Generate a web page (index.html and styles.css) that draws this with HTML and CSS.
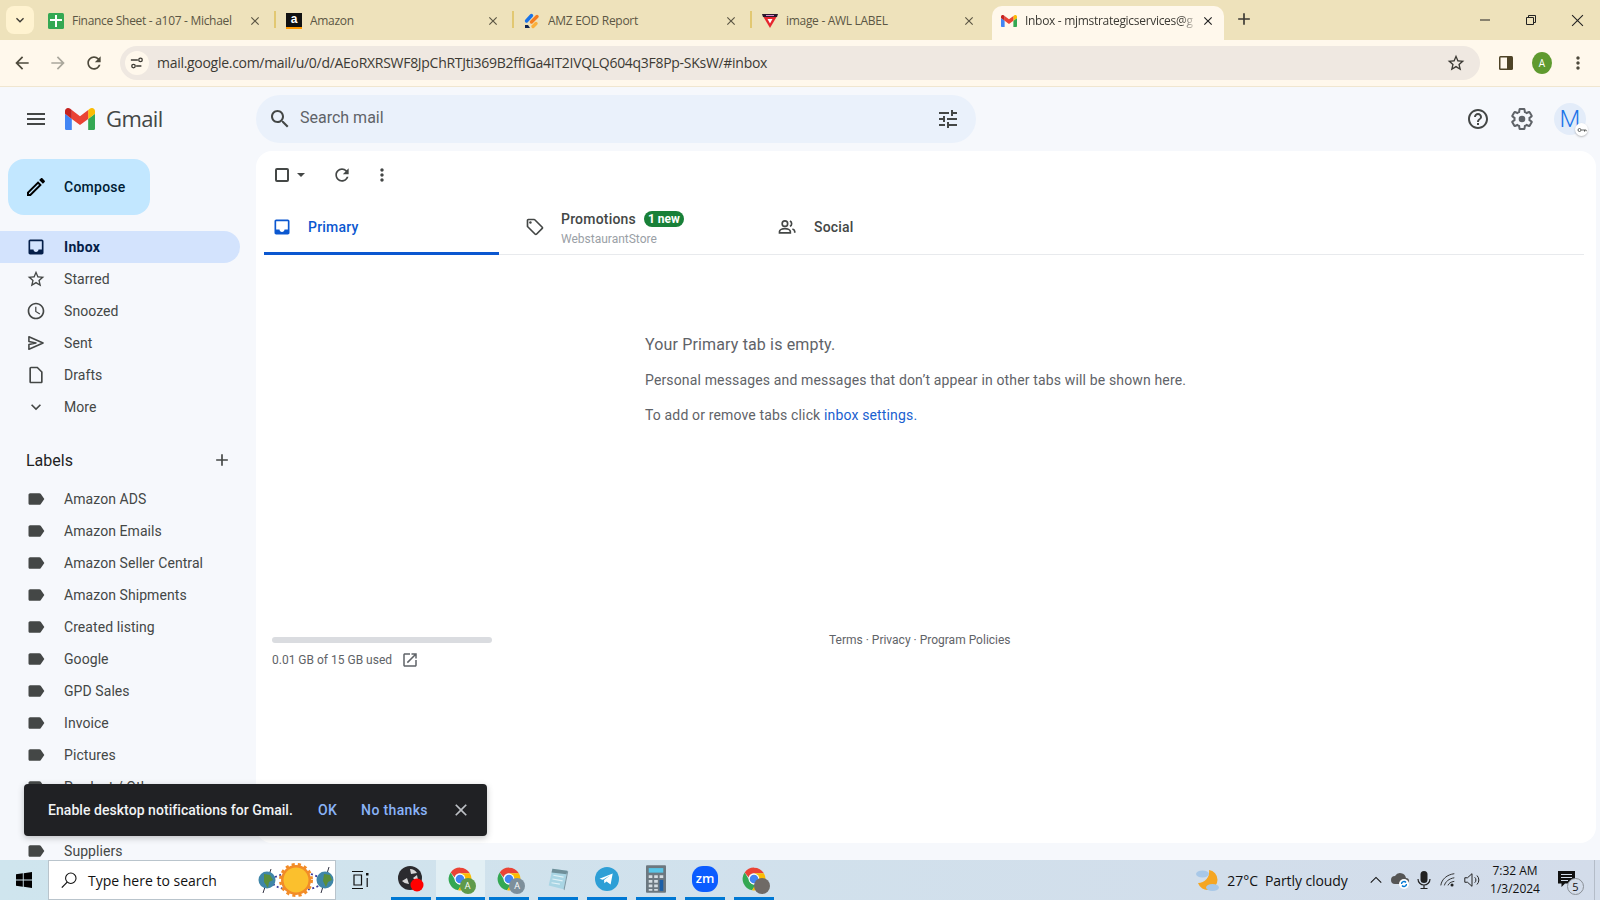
FILE: index.html
```html
<!DOCTYPE html>
<html lang="en">
<head>
    <meta charset="UTF-8">
    <title>Inbox - Gmail</title>
    <link rel="stylesheet" href="styles.css">
</head>
<body>
    <svg class="defs" width="0" height="0">
        <symbol id="chrome" viewBox="0 0 48 48">
            <path fill="#ea4335" d="M24 3a21 21 0 0 1 18.2 10.5H24a10.5 10.5 0 0 0-10 7.3L6.8 11.800A21 21 0 0 1 24 3z"/>
            <path fill="#34a853" d="M6.800 11.800 15 26a10.5 10.5 0 0 0 12.500 8.400L20.500 44.700A21 21 0 0 1 6.800 11.800z"/>
            <path fill="#fbbc04" d="M42.200 13.500A21 21 0 0 1 20.500 44.700L29 30a10.5 10.5 0 0 0 0-12.500l-5-4z"/>
            <circle cx="24" cy="24" r="10" fill="#fff"/>
            <circle cx="24" cy="24" r="8" fill="#4285f4"/>
        </symbol>
        <symbol id="close" viewBox="0 0 24 24">
            <path d="M19 6.41 17.59 5 12 10.59 6.41 5 5 6.41 10.59 12 5 17.59 6.41 19 12 13.41 17.59 19 19 17.59 13.41 12z"/>
        </symbol>
        <symbol id="label" viewBox="0 0 24 24">
            <path d="M17.63 5.84C17.27 5.33 16.67 5 16 5L5 5.01C3.9 5.01 3 5.9 3 7v10c0 1.1.9 1.99 2 1.99L16 19c.67 0 1.27-.33 1.63-.84L22 12l-4.37-6.16z"/>
        </symbol>
        <symbol id="gmail-m" viewBox="52 42 88 66">
            <path fill="#4285f4" d="M58 108h14V74L52 59v43c0 3.32 2.69 6 6 6"/>
            <path fill="#34a853" d="M120 108h14c3.32 0 6-2.69 6-6V59l-20 15"/>
            <path fill="#fbbc04" d="M120 48v26l20-15v-8c0-7.42-8.47-11.65-14.4-7.2"/>
            <path fill="#ea4335" d="M72 74V48l24 18 24-18v26L96 92"/>
            <path fill="#c5221f" d="M52 51v8l20 15V48l-5.6-4.2c-5.94-4.45-14.4-.22-14.4 7.2"/>
        </symbol>
        <symbol id="inbox" viewBox="0 0 24 24">
            <path d="M19 3H5c-1.1 0-2 .9-2 2v14c0 1.1.9 2 2 2h14c1.1 0 2-.9 2-2V5c0-1.100-.9-2-2-2zm0 12h-4c0 1.66-1.34 3-3 3s-3-1.34-3-3H5V5h14v10z"/>
        </symbol>
    </svg>

    <div class="tabstrip">
        <button class="tab-search"><svg viewBox="0 0 24 24" width="16" height="16"><path d="M16.59 8.59 12 13.17 7.41 8.59 6 10l6 6 6-6z"/></svg></button>
        <div class="tab">
            <svg class="favicon" viewBox="0 0 16 16"><rect width="16" height="16" rx="1.5" fill="#34a853"/><path fill="#fff" d="M7 2h2v4h5v2H9v6H7V8H2V6h5z"/></svg>
            <span class="tab-title">Finance Sheet - a107 - Michael</span>
            <svg class="tab-close"><use href="#close"/></svg>
        </div>
        <div class="tab">
            <span class="favicon fav-amazon">a</span>
            <span class="tab-title">Amazon</span>
            <svg class="tab-close"><use href="#close"/></svg>
        </div>
        <div class="tab">
            <svg class="favicon" viewBox="0 0 16 16"><path stroke="#1a73e8" stroke-width="3.4" stroke-linecap="round" d="M2.5 8 7.500 2.500"/><path stroke="#f57c1f" stroke-width="3.4" stroke-linecap="round" d="M7.500 9 13 3.500"/><path stroke="#fbb03b" stroke-width="3.4" stroke-linecap="round" d="M9 13.500l3-3"/><path fill="#12264f" d="M1 12h3l2 3H1z"/></svg>
            <span class="tab-title">AMZ EOD Report</span>
            <svg class="tab-close"><use href="#close"/></svg>
        </div>
        <div class="tab tab-last">
            <svg class="favicon" viewBox="0 0 16 16"><path fill="#2b1a2e" d="M0 1h16l-1 3H1z"/><path fill="#e6262e" d="M1.500 4h13L8 15z"/><path fill="#fff" d="M5.500 6h5L8 10.500z"/><path fill="#d98ad0" d="M4 2h8v1H4z"/></svg>
            <span class="tab-title">image - AWL LABEL</span>
            <svg class="tab-close"><use href="#close"/></svg>
        </div>
        <div class="tab tab-active">
            <svg class="favicon"><use href="#gmail-m"/></svg>
            <span class="tab-title tab-fade">Inbox - mjmstrategicservices@g</span>
            <svg class="tab-close"><use href="#close"/></svg>
        </div>
        <button class="new-tab"><svg viewBox="0 0 24 24" width="20" height="20"><path d="M19 13h-6v6h-2v-6H5v-2h6V5h2v6h6v2z"/></svg></button>
        <div class="window-controls">
            <span class="win-btn"><svg viewBox="0 0 12 12" width="12" height="12"><path d="M1 6h10" stroke="#222" fill="none"/></svg></span>
            <span class="win-btn"><svg viewBox="0 0 12 12" width="12" height="12"><path d="M1.500 3.500h7v7h-7zM3.500 3.500v-2h7v7h-2" stroke="#222" fill="none"/></svg></span>
            <span class="win-btn"><svg viewBox="0 0 12 12" width="13" height="13"><path d="M1 1l10 10M11 1 1 11" stroke="#222" fill="none"/></svg></span>
        </div>
    </div>

    <div class="toolbar">
        <span class="nav-btn"><svg viewBox="0 0 24 24" width="20" height="20"><path d="M20 11H7.83l5.59-5.59L12 4l-8 8 8 8 1.41-1.41L7.83 13H20v-2z"/></svg></span>
        <span class="nav-btn nav-disabled"><svg viewBox="0 0 24 24" width="20" height="20"><path d="M12 4l-1.41 1.41L16.17 11H4v2h12.17l-5.58 5.59L12 20l8-8z"/></svg></span>
        <span class="nav-btn"><svg viewBox="0 0 24 24" width="20" height="20"><path d="M17.65 6.35C16.2 4.9 14.21 4 12 4c-4.42 0-7.99 3.58-7.99 8s3.57 8 7.99 8c3.73 0 6.84-2.55 7.73-6h-2.08c-.82 2.33-3.04 4-5.65 4-3.31 0-6-2.69-6-6s2.69-6 6-6c1.66 0 3.14.69 4.22 1.78L13 11h7V4l-2.35 2.35z"/></svg></span>
        <div class="address">
            <span class="site-info"><svg viewBox="0 0 16 16" width="14" height="14"><path d="M1 4.500h8M13 11.500H7" stroke="#3c3a34" stroke-width="1.600" fill="none"/><circle cx="12" cy="4.500" r="2" stroke="#3c3a34" stroke-width="1.500" fill="none"/><circle cx="4" cy="11.500" r="2" stroke="#3c3a34" stroke-width="1.500" fill="none"/></svg></span>
            <span class="url">mail.google.com/mail/u/0/d/AEoRXRSWF8JpChRTJti369B2ffIGa4IT2IVQLQ604q3F8Pp-SKsW/#inbox</span>
            <svg class="bookmark" viewBox="0 0 24 24" width="20" height="20"><path d="M22 9.24l-7.19-.62L12 2 9.19 8.63 2 9.24l5.46 4.73L5.82 21 12 17.27 18.18 21l-1.63-7.03L22 9.24zM12 15.4l-3.76 2.27 1-4.28-3.32-2.88 4.38-.38L12 6.1l1.71 4.04 4.38.38-3.32 2.88 1 4.28L12 15.4z"/></svg>
        </div>
        <span class="nav-btn"><svg viewBox="0 0 16 16" width="16" height="16"><rect x="1" y="1" width="14" height="14" rx="1.500" fill="#4e4326"/><rect x="2.500" y="2.500" width="6.500" height="11" fill="#fff8ec"/></svg></span>
        <span class="nav-btn"><span class="chrome-avatar">A</span></span>
        <span class="nav-btn"><svg viewBox="0 0 24 24" width="20" height="20"><path d="M12 8c1.1 0 2-.9 2-2s-.9-2-2-2-2 .9-2 2 .9 2 2 2zm0 2c-1.100 0-2 .9-2 2s.9 2 2 2 2-.9 2-2-.9-2-2-2zm0 6c-1.100 0-2 .9-2 2s.9 2 2 2 2-.9 2-2-.9-2-2-2z"/></svg></span>
    </div>

    <div class="app">
        <div class="brand">
            <svg class="icon menu-icon" viewBox="0 0 24 24" width="24" height="24"><path d="M3 18h18v-2H3v2zm0-5h18v-2H3v2zm0-7v2h18V6H3z"/></svg>
            <svg class="gmail-logo" width="30" height="22.500"><use href="#gmail-m"/></svg>
            <span class="gmail-word">Gmail</span>
        </div>

        <div class="topbar">
            <div class="searchbox">
                <svg class="icon" viewBox="0 0 24 24" width="24" height="24"><path d="M15.5 14h-.79l-.28-.27C15.41 12.59 16 11.11 16 9.5 16 5.91 13.09 3 9.5 3S3 5.91 3 9.5 5.91 16 9.5 16c1.61 0 3.09-.59 4.23-1.57l.27.28v.79l5 4.99L20.49 19l-4.99-5zm-6 0C7.01 14 5 11.99 5 9.5S7.01 5 9.5 5 14 7.01 14 9.5 11.99 14 9.5 14z"/></svg>
                <span class="search-text">Search mail</span>
                <svg class="icon tune" viewBox="0 0 24 24" width="24" height="24"><path d="M3 17v2h6v-2H3zM3 5v2h10V5H3zm10 16v-2h8v-2h-8v-2h-2v6h2zM7 9v2H3v2h4v2h2V9H7zm14 4v-2H11v2h10zm-6-4h2V7h4V5h-4V3h-2v6z"/></svg>
            </div>
            <div class="top-actions">
                <span class="top-btn"><svg class="icon" viewBox="0 0 24 24" width="24" height="24"><path d="M11 18h2v-2h-2v2zm1-16C6.48 2 2 6.48 2 12s4.48 10 10 10 10-4.48 10-10S17.52 2 12 2zm0 18c-4.41 0-8-3.59-8-8s3.59-8 8-8 8 3.59 8 8-3.59 8-8 8zm0-14c-2.21 0-4 1.79-4 4h2c0-1.1.9-2 2-2s2 .9 2 2c0 2-3 1.75-3 5h2c0-2.25 3-2.5 3-5 0-2.21-1.79-4-4-4z"/></svg></span>
                <span class="top-btn"><svg class="gear" viewBox="0 0 24 24" width="24" height="24"><path d="M19.43 12.98c.04-.32.07-.64.07-.98s-.03-.66-.07-.98l2.11-1.65c.19-.15.24-.42.12-.64l-2-3.46c-.12-.22-.39-.3-.61-.22l-2.49 1c-.52-.4-1.08-.73-1.69-.98l-.38-2.65C14.46 2.18 14.25 2 14 2h-4c-.25 0-.46.18-.49.42l-.38 2.65c-.61.25-1.17.59-1.69.98l-2.49-1c-.23-.09-.49 0-.61.22l-2 3.46c-.13.22-.07.49.12.64l2.11 1.65c-.04.32-.07.65-.07.98s.03.66.07.98l-2.11 1.65c-.19.15-.24.42-.12.64l2 3.46c.12.22.39.3.61.22l2.49-1c.52.4 1.08.73 1.69.98l.38 2.65c.03.24.24.42.49.42h4c.25 0 .46-.18.49-.42l.38-2.65c.61-.25 1.17-.59 1.69-.98l2.49 1c.23.09.49 0 .61-.22l2-3.46c.12-.22.07-.49-.12-.64l-2.11-1.65z"/><circle cx="12" cy="12" r="3.3"/></svg></span>
                <span class="account">M<span class="key-badge"><svg viewBox="0 0 12 12" width="10" height="10"><circle cx="3" cy="6" r="1.800" fill="none" stroke="#444746"/><path d="M5 6h6M9 6v2M11 6v1.500" stroke="#444746" fill="none"/></svg></span></span>
            </div>
        </div>

        <aside class="sidebar">
            <button class="compose">
                <svg viewBox="0 0 24 24" width="24" height="24"><path d="M14.06 9.02l.92.92L5.92 19H5v-.92l9.06-9.06M17.66 3c-.25 0-.51.1-.7.29l-1.83 1.83 3.75 3.75 1.83-1.83c.39-.39.39-1.02 0-1.41l-2.34-2.34c-.2-.2-.45-.29-.71-.29zm-3.6 3.19L3 17.25V21h3.75L17.81 9.94l-3.75-3.75z"/></svg>
                Compose
            </button>
            <nav class="mainnav">
                <a class="nav-row nav-selected"><svg><use href="#inbox"/></svg>Inbox</a>
                <a class="nav-row"><svg viewBox="0 0 24 24"><path d="M22 9.24l-7.19-.62L12 2 9.19 8.63 2 9.24l5.46 4.73L5.82 21 12 17.27 18.18 21l-1.63-7.03L22 9.24zM12 15.4l-3.76 2.27 1-4.28-3.32-2.88 4.38-.38L12 6.1l1.71 4.04 4.38.38-3.32 2.88 1 4.28L12 15.4z"/></svg>Starred</a>
                <a class="nav-row"><svg viewBox="0 0 24 24"><path d="M11.99 2C6.47 2 2 6.48 2 12s4.47 10 9.99 10C17.52 22 22 17.52 22 12S17.52 2 11.99 2zM12 20c-4.42 0-8-3.58-8-8s3.58-8 8-8 8 3.58 8 8-3.58 8-8 8zm.5-13H11v6l5.25 3.15.75-1.23-4.5-2.67z"/></svg>Snoozed</a>
                <a class="nav-row"><svg viewBox="0 0 24 24"><path class="sent-shape" d="M3.500 4.500 20.500 12 3.500 19.500v-5.700L12 12 3.500 10.200z"/></svg>Sent</a>
                <a class="nav-row"><svg viewBox="0 0 24 24"><path d="M14 2H6c-1.1 0-2 .9-2 2v16c0 1.1.9 2 2 2h12c1.100 0 2-.9 2-2V8l-6-6zM6 20V4h7.200L18 8.800V20H6z"/></svg>Drafts</a>
                <a class="nav-row"><svg viewBox="0 0 24 24"><path d="M16.59 8.59 12 13.17 7.41 8.59 6 10l6 6 6-6z"/></svg>More</a>
            </nav>
            <div class="labels-head">
                <span>Labels</span>
                <svg viewBox="0 0 24 24" width="20" height="20"><path d="M19 13h-6v6h-2v-6H5v-2h6V5h2v6h6v2z"/></svg>
            </div>
            <nav class="labels">
                <a class="nav-row"><svg><use href="#label"/></svg>Amazon ADS</a>
                <a class="nav-row"><svg><use href="#label"/></svg>Amazon Emails</a>
                <a class="nav-row"><svg><use href="#label"/></svg>Amazon Seller Central</a>
                <a class="nav-row"><svg><use href="#label"/></svg>Amazon Shipments</a>
                <a class="nav-row"><svg><use href="#label"/></svg>Created listing</a>
                <a class="nav-row"><svg><use href="#label"/></svg>Google</a>
                <a class="nav-row"><svg><use href="#label"/></svg>GPD Sales</a>
                <a class="nav-row"><svg><use href="#label"/></svg>Invoice</a>
                <a class="nav-row"><svg><use href="#label"/></svg>Pictures</a>
                <a class="nav-row"><svg><use href="#label"/></svg>Product / Other</a>
                <a class="nav-row"><svg><use href="#label"/></svg></a>
                <a class="nav-row"><svg><use href="#label"/></svg>Suppliers</a>
            </nav>
        </aside>

        <main class="panel">
            <div class="mail-tools">
                <span class="checkbox"></span>
                <span class="caret"></span>
                <svg class="icon tool-refresh" viewBox="0 0 24 24" width="20" height="20"><path d="M17.65 6.35C16.2 4.9 14.21 4 12 4c-4.42 0-7.99 3.58-7.99 8s3.57 8 7.99 8c3.73 0 6.84-2.55 7.73-6h-2.08c-.82 2.33-3.04 4-5.65 4-3.31 0-6-2.69-6-6s2.69-6 6-6c1.66 0 3.14.69 4.22 1.78L13 11h7V4l-2.35 2.35z"/></svg>
                <svg class="icon tool-more" viewBox="0 0 24 24" width="20" height="20"><path d="M12 8c1.1 0 2-.9 2-2s-.9-2-2-2-2 .9-2 2 .9 2 2 2zm0 2c-1.100 0-2 .9-2 2s.9 2 2 2 2-.9 2-2-.9-2-2-2zm0 6c-1.100 0-2 .9-2 2s.9 2 2 2 2-.9 2-2-.9-2-2-2z"/></svg>
            </div>
            <div class="mail-tabs">
                <div class="mail-tab mail-tab-on">
                    <svg width="20" height="20"><use href="#inbox"/></svg>
                    <span class="mail-tab-name">Primary</span>
                </div>
                <div class="mail-tab">
                    <svg viewBox="0 0 24 24" width="20" height="20"><path d="M21.41 11.58l-9-9C12.05 2.22 11.55 2 11 2H4c-1.100 0-2 .9-2 2v7c0 .55.22 1.05.59 1.42l9 9c.36.36.86.58 1.41.58s1.05-.22 1.41-.59l7-7c.37-.36.59-.86.59-1.41s-.23-1.06-.59-1.42zM13 20.01 4 11V4h7v-.01l9 9-7 7.02z"/><circle cx="6.5" cy="6.5" r="1.5"/></svg>
                    <div class="mail-tab-text">
                        <div class="promo-line"><span class="mail-tab-name">Promotions</span><span class="new-pill">1 new</span></div>
                        <div class="promo-sub">WebstaurantStore</div>
                    </div>
                </div>
                <div class="mail-tab mail-tab-social">
                    <svg class="social-icon" viewBox="0 0 24 24" width="20" height="20"><circle cx="9.500" cy="8" r="3.300"/><path d="M3 19v-1.500c0-2 3.200-3.500 6.500-3.500s6.500 1.500 6.500 3.500V19z"/><path d="M15.500 4.800a3.500 3.500 0 0 1 0 6.400M18.500 14.300c1.700.6 2.800 1.700 2.800 3.200V19"/></svg>
                    <span class="mail-tab-name">Social</span>
                </div>
            </div>
            <div class="empty-msg">
                <p class="empty-title">Your Primary tab is empty.</p>
                <p class="empty-line">Personal messages and messages that don’t appear in other tabs will be shown here.</p>
                <p class="empty-line empty-last">To add or remove tabs click <a class="blue-link">inbox settings.</a></p>
            </div>
            <div class="mail-footer">
                <div class="storage">
                    <div class="storage-bar"></div>
                    <div class="storage-text">0.01 GB of 15 GB used
                        <svg viewBox="0 0 24 24" width="18" height="18"><path d="M19 19H5V5h7V3H5c-1.110 0-2 .9-2 2v14c0 1.100.89 2 2 2h14c1.100 0 2-.9 2-2v-7h-2v7zM14 3v2h3.590l-9.830 9.830 1.410 1.410L19 6.410V10h2V3h-7z"/></svg>
                    </div>
                </div>
                <div class="policies">Terms · Privacy · Program Policies</div>
            </div>
        </main>

        <div class="snackbar">
            <span class="snack-text">Enable desktop notifications for Gmail.</span>
            <a class="snack-link snack-ok">OK</a>
            <a class="snack-link">No thanks</a>
            <svg width="20" height="20"><use href="#close"/></svg>
        </div>
    </div>

    <footer class="taskbar">
        <span class="start"><svg viewBox="0 0 16 16" width="16" height="16"><path fill="#000" d="M0 2.300 6.800 1.300v6.200H0zM7.700 1.200 16 0v7.500H7.700zM0 8.400h6.800v6.300L0 13.700zM7.700 8.400H16V16l-8.300-1.200z"/></svg></span>
        <div class="win-search">
            <svg viewBox="0 0 20 20" width="18" height="18"><circle cx="12" cy="8" r="5.800" fill="none" stroke="#111" stroke-width="1.200"/><path d="M8 12.300 2 18.500" stroke="#111" stroke-width="1.400"/></svg>
            <span class="win-search-text">Type here to search</span>
            <svg class="doodle" viewBox="0 0 78 36" width="78" height="36">
                <path d="M14 7 6 31M72 5l-8 26" stroke="#334" stroke-width="1"/>
                <path d="M16 22c6 5 14 6 24 6s18-1 24-6M18 15l8-3M54 12l8 3" stroke="#3b3b9a" stroke-width="1.800" stroke-dasharray="2 2.500" fill="none"/>
                <circle cx="10" cy="18" r="8.500" fill="#3f86a8"/><path d="M7 12l6 1 3 5-4 2-1 6-4-6z" fill="#5b8f3a"/>
                <circle cx="68" cy="18" r="8.500" fill="#3f86a8"/><path d="M67 12l6 1 2 5-4 2-2 5-3-6z" fill="#5b8f3a"/>
                <circle cx="39" cy="18" r="15" fill="#f28c28" stroke="#f28c28" stroke-width="4" stroke-dasharray="3 3"/>
                <circle cx="39" cy="18" r="12.500" fill="#fbc02d"/>
            </svg>
        </div>
        <span class="task-view"><svg viewBox="0 0 20 20" width="20" height="20"><path d="M2 1.500h11M2 18.500h11M4 5h7.500v10H4z" stroke="#111" stroke-width="1.200" fill="none"/><path d="M16 3h2.500v2.500H16z" fill="#111"/><path d="M17.200 8v9" stroke="#111" stroke-width="1.200"/></svg></span>

        <div class="task-apps">
            <span class="task-app"><svg viewBox="0 0 28 28" width="28" height="28"><circle cx="13" cy="13" r="12" fill="#2b2b2f"/><path d="M13 4a9 9 0 0 1 7 4l-6 1zM5 16l5-3 2 6a9 9 0 0 1-7-3zM20 17l-4-4 4-3a9 9 0 0 1 0 7z" fill="#d6d6d6"/><circle cx="20" cy="20" r="6.500" fill="#f00"/></svg></span>
            <span class="task-app task-app-on"><svg width="26" height="26"><use href="#chrome"/></svg><span class="chrome-badge badge-green">A</span></span>
            <span class="task-app"><svg width="26" height="26"><use href="#chrome"/></svg><span class="chrome-badge badge-grey">A</span></span>
            <span class="task-app"><svg viewBox="0 0 28 28" width="26" height="26"><path d="M8 3 24 5 20 25 4 21z" fill="#a9d5e4"/><path d="M8 3 24 5 23.200 9 7 7z" fill="#6f8f99"/><path d="M20 25 24 5l1 1-4 20z" fill="#7e9aa5"/><path d="M9 10l11 2M8 14l11 2M7 18l9 1.500" stroke="#dff1f7" stroke-width="1.200"/></svg></span>
            <span class="task-app"><svg viewBox="0 0 26 26" width="26" height="26"><circle cx="13" cy="13" r="12" fill="#2e9fd6"/><path d="M5.500 12.700 18.700 7.500 16.600 18.500 12.500 15.400 10.400 17.300 10 14 16 9.500 8.800 13.700z" fill="#fff"/></svg></span>
            <span class="task-app"><svg viewBox="0 0 22 30" width="20" height="28"><rect width="22" height="30" rx="1" fill="#6c7880"/><rect x="3" y="3" width="16" height="5" fill="#58c6e8"/><path d="M3 11h4v3H3zM9 11h4v3H9zM15 11h4v3h-4zM3 16h4v3H3zM9 16h4v3H9zM3 21h4v3H3zM9 21h4v3H9zM3 26h4v2H3zM9 26h4v2H9z" fill="#d5dde2"/><rect x="15" y="16" width="4" height="12" fill="#1a5fa8"/></svg></span>
            <span class="task-app"><span class="zoom-icon">zm</span></span>
            <span class="task-app"><svg width="26" height="26"><use href="#chrome"/></svg><span class="chrome-badge badge-photo"></span></span>
        </div>

        <div class="tray">
            <svg class="tray-weather" viewBox="0 0 26 26" width="26" height="26"><path d="M14 3a10 10 0 1 1-11 13 11 11 0 0 0 11-13z" fill="#f5a623"/><ellipse cx="7.500" cy="7" rx="6.500" ry="3.500" fill="#a8c8e8"/><ellipse cx="17.500" cy="20.500" rx="6.500" ry="3.500" fill="#a8c8e8"/></svg>
            <span class="tray-temp">27°C</span>
            <span class="tray-cond">Partly cloudy</span>
            <span class="tray-icon tray-caret"><svg viewBox="0 0 16 16" width="14" height="14"><path d="M2 11 8 5l6 6" fill="none" stroke="#111" stroke-width="1.200"/></svg></span>
            <span class="tray-icon"><svg viewBox="0 0 20 20" width="20" height="20"><path d="M5 14a4 4 0 0 1 0-8 6 6 0 0 1 11 2 3 3 0 0 1 0 6z" fill="#555"/><circle cx="14" cy="14" r="5" fill="#fff"/><path d="M11.500 14a2.500 2.500 0 0 1 4.500-1.500M16.500 14a2.500 2.500 0 0 1-4.500 1.500" stroke="#0078d4" stroke-width="1.300" fill="none"/></svg></span>
            <span class="tray-icon"><svg viewBox="0 0 16 20" width="16" height="20"><rect x="4.500" y="1" width="7" height="12" rx="3.500" fill="#222"/><path d="M2 9a6 6 0 0 0 12 0M8 15v3M4.500 18.500h7" stroke="#222" stroke-width="1.200" fill="none"/></svg></span>
            <span class="tray-icon"><svg viewBox="0 0 20 20" width="18" height="18"><path d="M2 16C3 9 9 4 17 3M6 16c1-4 5-7.500 11-8.500M10 16c.5-2 3-4 7-4.500" fill="none" stroke="#333" stroke-width="1.100"/><circle cx="14.500" cy="15.500" r="1.700" fill="#222"/></svg></span>
            <span class="tray-icon"><svg viewBox="0 0 20 20" width="18" height="18"><path d="M2 7.500h3L10 3v14l-5-4.500H2z" fill="none" stroke="#222" stroke-width="1.100"/><path d="M13 7a4 4 0 0 1 0 6M15.500 5a7 7 0 0 1 0 10" fill="none" stroke="#222" stroke-width="1.100"/></svg></span>
            <div class="clock"><div>7:32 AM</div><div>1/3/2024</div></div>
            <span class="notif">
                <svg viewBox="0 0 18 18" width="18" height="18"><path d="M0 0h17v12.500H7l-3.500 3.500v-3.500H0z" fill="#111"/><path d="M3 3.500h11M3 6.500h11M3 9.500h7" stroke="#d3dcea" stroke-width="1"/></svg>
                <span class="notif-count">5</span>
            </span>
        </div>
    </footer>
</body>
</html>
```

FILE: styles.css
```css
/* Basic reset */
* {
    margin: 0;
    padding: 0;
    box-sizing: border-box;
}

body {
    width: 1600px;
    height: 900px;
    display: flex;
    flex-direction: column;
    overflow: hidden;
    font-family: Roboto, "Liberation Sans", sans-serif;
    color: #444746;
    background: #f6f8fc;
}

.defs {
    position: absolute;
}

button {
    border: none;
    background: none;
    font-family: inherit;
}

/* Chrome tab strip */
.tabstrip {
    height: 40px;
    flex-shrink: 0;
    display: flex;
    align-items: flex-end;
    padding-left: 6px;
    background: #eee2bb;
    font-family: "Open Sans", "Noto Sans", sans-serif;
}

.tab-search {
    width: 28px;
    height: 28px;
    margin: 0 4px 6px 0;
    display: flex;
    align-items: center;
    justify-content: center;
    background: #fff3d0;
    border-radius: 8px;
}

.tab-search svg,
.new-tab svg {
    fill: #3c3a34;
}

.tab {
    width: 238px;
    height: 34px;
    padding: 0 14px 5px 10px;
    display: flex;
    align-items: center;
    position: relative;
}

.tab::after {
    content: "";
    position: absolute;
    right: 0;
    top: 5px;
    width: 2px;
    height: 17px;
    background: #e2c872;
}

.tab-last::after,
.tab-active::after {
    display: none;
}

.tab-active {
    width: 232px;
    margin-left: 2px;
    padding: 0 9px 5px;
    background: #fff8ec;
    border-radius: 10px 10px 0 0;
}

.favicon {
    width: 16px;
    height: 16px;
    flex-shrink: 0;
    fill: none;
}

.fav-amazon {
    background: #111;
    color: #fff;
    font: bold 12px/13px "Liberation Sans", sans-serif;
    text-align: center;
    border-bottom: 2px solid #f90;
}

.tab-title {
    flex: 1;
    margin-left: 8px;
    font-size: 12px;
    letter-spacing: -0.3px;
    color: #5b5644;
    white-space: nowrap;
    overflow: hidden;
}

.tab-active .tab-title {
    color: #3c3a34;
}

.tab-fade {
    -webkit-mask-image: linear-gradient(to right, #000 calc(100% - 16px), transparent);
    mask-image: linear-gradient(to right, #000 calc(100% - 16px), transparent);
}

.tab-close {
    width: 14px;
    height: 14px;
    margin-left: 4px;
    flex-shrink: 0;
    fill: #5b5644;
}

.tab-active .tab-close {
    fill: #222;
}

.new-tab {
    width: 24px;
    height: 24px;
    margin: 0 0 9px 8px;
    display: flex;
    align-items: center;
    justify-content: center;
}

.window-controls {
    margin-left: auto;
    align-self: stretch;
    display: flex;
}

.win-btn {
    width: 46px;
    display: flex;
    align-items: center;
    justify-content: center;
}

/* Chrome toolbar */
.toolbar {
    height: 47px;
    flex-shrink: 0;
    display: flex;
    align-items: center;
    padding: 0 4px 1px 4px;
    background: #fff8ec;
    border-bottom: 1px solid #f0e6d0;
}

.nav-btn {
    width: 36px;
    height: 34px;
    display: flex;
    align-items: center;
    justify-content: center;
    flex-shrink: 0;
    fill: #4e4a3c;
}

.nav-disabled {
    fill: #aaa79c;
}

.address {
    flex: 1;
    height: 34px;
    margin: 0 8px;
    padding-right: 14px;
    display: flex;
    align-items: center;
    background: #efe8e1;
    border-radius: 17px;
}

.site-info {
    width: 24px;
    height: 24px;
    margin-left: 5px;
    display: flex;
    align-items: center;
    justify-content: center;
    background: #fff8ec;
    border-radius: 50%;
}

.url {
    margin-left: 8px;
    flex: 1;
    font-family: "Open Sans", "Noto Sans", sans-serif;
    font-size: 14px;
    letter-spacing: -0.29px;
    color: #3c3a34;
    white-space: nowrap;
}

.bookmark {
    fill: #3c3a34;
}

.chrome-avatar {
    width: 20px;
    height: 22px;
    border-radius: 50%;
    background: #5f9a2f;
    color: #fff;
    font: 10px/22px "Open Sans", sans-serif;
    text-align: center;
}

/* Gmail shell */
.app {
    flex: 1;
    min-height: 0;
    position: relative;
    display: grid;
    grid-template-columns: 256px 1fr;
    grid-template-rows: 64px 1fr;
}

.icon {
    fill: #444746;
    flex-shrink: 0;
}

.brand {
    display: flex;
    align-items: center;
    padding: 0 0 0 24px;
}

.menu-icon {
    margin-right: 17px;
}

.gmail-word {
    margin: -2px 0 0 11px;
    font-family: "Open Sans", sans-serif;
    font-size: 22px;
    letter-spacing: -0.6px;
    color: #444746;
}

.topbar {
    display: flex;
    align-items: center;
    padding-right: 14px;
}

.searchbox {
    width: 720px;
    height: 48px;
    display: flex;
    align-items: center;
    padding: 0 16px 0 12px;
    background: #eaf1fb;
    border-radius: 24px;
}

.search-text {
    flex: 1;
    margin: -3px 0 0 8px;
    font-size: 16px;
    color: #5f6368;
}

.top-actions {
    margin-left: auto;
    display: flex;
    align-items: center;
}

.top-btn {
    width: 44px;
    display: flex;
    justify-content: center;
}

.gear {
    fill: none;
    stroke: #5f6368;
    stroke-width: 2;
}

.gear circle {
    fill: #5f6368;
    stroke: none;
}

.account {
    width: 32px;
    height: 32px;
    margin-left: 10px;
    position: relative;
    border-radius: 50%;
    background: #e3ecf9;
    color: #1a73e8;
    font-size: 24px;
    font-weight: 300;
    line-height: 32px;
    text-align: center;
}

.key-badge {
    position: absolute;
    right: -2px;
    bottom: -1px;
    width: 13px;
    height: 13px;
    display: flex;
    align-items: center;
    justify-content: center;
    border-radius: 50%;
    background: #fff;
    box-shadow: 0 1px 2px rgba(0, 0, 0, 0.25);
}

/* Left column */
.sidebar {
    overflow: hidden;
    min-height: 0;
}

.compose {
    width: 142px;
    height: 56px;
    margin: 8px 0 0 8px;
    display: flex;
    align-items: center;
    gap: 16px;
    padding-left: 16px;
    background: #c2e7ff;
    border-radius: 16px;
    color: #001d35;
    font-size: 14px;
    font-weight: 500;
    letter-spacing: 0.25px;
}

.mainnav {
    margin-top: 16px;
}

.nav-row {
    width: 240px;
    height: 32px;
    display: flex;
    align-items: center;
    gap: 18px;
    padding-left: 26px;
    border-radius: 0 16px 16px 0;
    font-size: 14px;
    letter-spacing: 0.07px;
    color: #444746;
    white-space: nowrap;
}

.nav-row svg {
    width: 20px;
    height: 20px;
    flex-shrink: 0;
    fill: #444746;
}

.nav-row .sent-shape {
    fill: none;
    stroke: #444746;
    stroke-width: 1.9;
    stroke-linejoin: round;
}

.nav-selected {
    background: #d3e3fd;
    color: #041e49;
    font-weight: 700;
    letter-spacing: 0.3px;
}

.nav-selected svg {
    fill: #041e49;
}

.labels-head {
    width: 240px;
    height: 32px;
    margin-top: 21px;
    padding: 0 8px 0 26px;
    display: flex;
    align-items: center;
    justify-content: space-between;
    font-size: 16px;
    color: #1f1f1f;
    fill: #444746;
}

.labels {
    margin-top: 7px;
}

/* Mail panel */
.panel {
    margin: 0 4px 17px 0;
    background: #fff;
    border-radius: 16px;
    min-height: 0;
}

.mail-tools {
    height: 48px;
    display: flex;
    align-items: center;
    padding-left: 19px;
}

.checkbox {
    width: 14px;
    height: 14px;
    border: 2px solid #444746;
    border-radius: 2px;
}

.caret {
    margin-left: 8px;
    border: 4px solid transparent;
    border-top: 4px solid #444746;
    border-bottom: none;
}

.tool-refresh {
    margin-left: 27px;
}

.tool-more {
    margin-left: 20px;
}

.mail-tabs {
    height: 56px;
    margin: 0 12px 0 8px;
    display: flex;
    gap: 17px;
    border-bottom: 1px solid #e8eaed;
}

.mail-tab {
    width: 235px;
    display: flex;
    align-items: center;
    gap: 16px;
    padding-left: 9px;
    fill: #444746;
    font-size: 14px;
    font-weight: 500;
    letter-spacing: 0.2px;
    color: #444746;
}

.mail-tab-on {
    height: 56px;
    padding: 3px 0 0 8px;
    color: #0b57d0;
    fill: #0b57d0;
    border-bottom: 3px solid #0b57d0;
}

.mail-tab-social {
    gap: 17px;
}

.social-icon {
    fill: none;
    stroke: #444746;
    stroke-width: 2;
}

.mail-tab-text {
    padding-top: 4px;
}

.promo-line {
    display: flex;
    align-items: center;
    gap: 8px;
}

.new-pill {
    padding: 0 4px;
    height: 16px;
    border-radius: 8px;
    background: #188038;
    color: #fff;
    font-size: 12px;
    font-weight: 700;
    letter-spacing: 0;
    line-height: 16px;
}

.promo-sub {
    margin-top: 5px;
    font-size: 12px;
    font-weight: 400;
    letter-spacing: 0;
    line-height: 14px;
    color: #9aa0a6;
}

.empty-msg {
    padding: 78px 0 0 389px;
    color: #5f6368;
    letter-spacing: 0.15px;
}

.empty-title {
    font-size: 16px;
    line-height: 24px;
}

.empty-line {
    margin-top: 13px;
    font-size: 14px;
    line-height: 20px;
}

.empty-last {
    margin-top: 15px;
}

.blue-link {
    color: #1a5fd0;
}

.mail-footer {
    margin-top: 207px;
    display: flex;
    padding-left: 16px;
    font-size: 12px;
    color: #5f6368;
}

.storage {
    width: 220px;
    padding-top: 5px;
}

.storage-bar {
    height: 6px;
    border-radius: 3px;
    background: #dadce0;
}

.storage-text {
    margin-top: 8px;
    display: flex;
    align-items: center;
    gap: 9px;
    height: 18px;
    fill: #5f6368;
}

.policies {
    margin-left: 337px;
    line-height: 16px;
}

/* Overlay at the bottom left */
.snackbar {
    position: absolute;
    left: 24px;
    top: 697px;
    width: 463px;
    height: 52px;
    display: flex;
    align-items: center;
    padding: 0 16px 0 24px;
    background: #202124;
    border-radius: 4px;
    box-shadow: 0 2px 6px rgba(60, 64, 67, 0.3);
    font-size: 14px;
    font-weight: 500;
    fill: #bdc1c6;
}

.snack-text {
    color: #f1f3f4;
    letter-spacing: 0.05px;
}

.snack-link {
    margin-left: 24px;
    color: #8ab4f8;
    letter-spacing: 0.35px;
}

.snack-ok {
    margin-left: 25px;
}

.snackbar svg {
    margin-left: auto;
}

/* Windows taskbar */
.taskbar {
    height: 40px;
    flex-shrink: 0;
    display: flex;
    align-items: center;
    background: linear-gradient(to right, #cfe5ee, #d3dcea);
    font-family: "Open Sans", "Noto Sans", sans-serif;
    color: #111;
}

.start {
    width: 48px;
    display: flex;
    justify-content: center;
}

.win-search {
    width: 288px;
    height: 40px;
    display: flex;
    align-items: center;
    padding-left: 11px;
    background: #fff;
    border: 1px solid #b9c4cc;
}

.win-search-text {
    flex: 1;
    margin-left: 10px;
    font-size: 14px;
}

.task-view {
    width: 48px;
    display: flex;
    justify-content: center;
}

.task-apps {
    margin-left: 7px;
    display: flex;
    gap: 9px;
}

.task-app {
    width: 40px;
    height: 40px;
    position: relative;
    display: flex;
    align-items: center;
    justify-content: center;
    border-bottom: 3px solid #0078d4;
}

.task-app-on {
    width: 49px;
    margin: 0 -4.5px;
    background: #e2eff4;
}

.chrome-badge {
    position: absolute;
    right: 4px;
    bottom: 3px;
    width: 16px;
    height: 16px;
    border-radius: 50%;
    color: #fff;
    font-size: 9px;
    line-height: 16px;
    text-align: center;
}

.task-app-on .chrome-badge {
    right: 9px;
}

.badge-green {
    background: #5f9a4a;
}

.badge-grey {
    background: #7d8f9b;
}

.badge-photo {
    background: #6f6a66;
}

.zoom-icon {
    width: 26px;
    height: 26px;
    border-radius: 11px;
    background: #0b5cff;
    color: #fff;
    font-size: 13px;
    font-weight: 600;
    line-height: 24px;
    text-align: center;
}

.tray {
    margin-left: auto;
    display: flex;
    align-items: center;
    height: 40px;
    padding-right: 5px;
    font-size: 14px;
}

.tray-temp {
    margin-left: 6px;
}

.tray-cond {
    width: 92px;
    margin-left: 7px;
    letter-spacing: -0.1px;
}

.tray-icon {
    width: 24px;
    display: flex;
    justify-content: center;
}

.tray-caret {
    margin-left: 7px;
}

.clock {
    width: 72px;
    margin-left: -5px;
    font-size: 12px;
    line-height: 18px;
    text-align: center;
}

.notif {
    width: 44px;
    height: 40px;
    position: relative;
    display: flex;
    align-items: center;
    padding-left: 7px;
    border-right: 1px solid #b4bcc8;
}

.notif-count {
    position: absolute;
    left: 16px;
    top: 18px;
    width: 17px;
    height: 17px;
    border-radius: 50%;
    border: 1px solid #8a8f96;
    background: #d3dcea;
    font-size: 11px;
    line-height: 15px;
    text-align: center;
}
```
